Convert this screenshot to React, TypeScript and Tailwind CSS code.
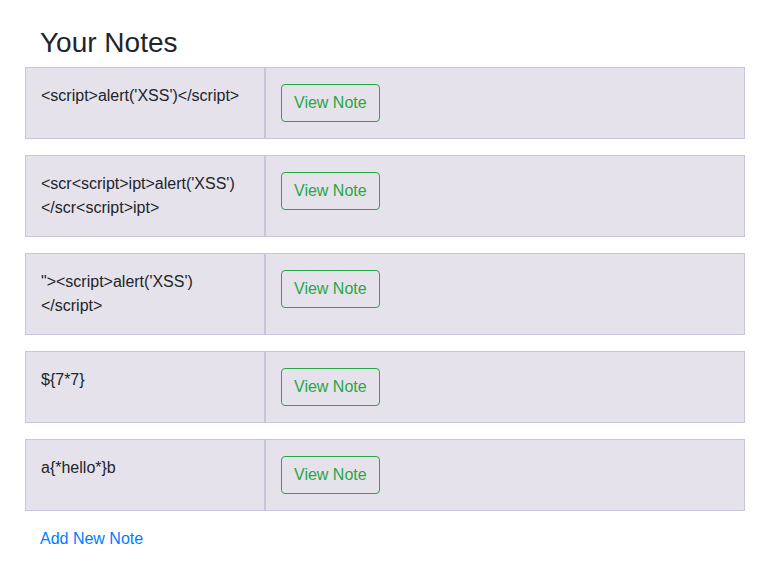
const notes = [
  ["<script>alert('XSS')</script>"],
  ["<scr<script>ipt>alert('XSS')", "</scr<script>ipt>"],
  ["\"><script>alert('XSS')", "</script>"],
  ["${7*7}"],
  ["a{*hello*}b"],
]

function NoteRow({ lines }: { lines: string[] }) {
  return (
    <div className="flex">
      <div className="w-[240px] border border-[#c9c5d9] bg-[#e5e2ec] px-[15px] py-4 leading-6">
        {lines.map((l, i) => (
          <div key={i}>{l}</div>
        ))}
      </div>
      <div className="flex-1 border border-[#c9c5d9] bg-[#e5e2ec] px-[15px] py-4">
        <button className="h-[38px] rounded border border-[#28a745] px-3 text-base text-[#28a745]">
          View Note
        </button>
      </div>
    </div>
  )
}

export default function App() {
  return (
    <div
      className="min-h-[572px] bg-white text-[#212529]"
      style={{ fontFamily: '"Liberation Sans", Arial, sans-serif' }}
    >
      <div className="ml-[25px] w-[720px] pt-[26px]">
        <h3 className="mb-[7px] px-[15px] text-[28px] leading-[1.2]">Your Notes</h3>
        <div className="flex flex-col gap-4">
          {notes.map((n, i) => (
            <NoteRow key={i} lines={n} />
          ))}
        </div>
        <div className="mt-4 px-[15px] leading-6">
          <a href="#" className="text-[#007bff]">Add New Note</a>
        </div>
      </div>
    </div>
  )
}
